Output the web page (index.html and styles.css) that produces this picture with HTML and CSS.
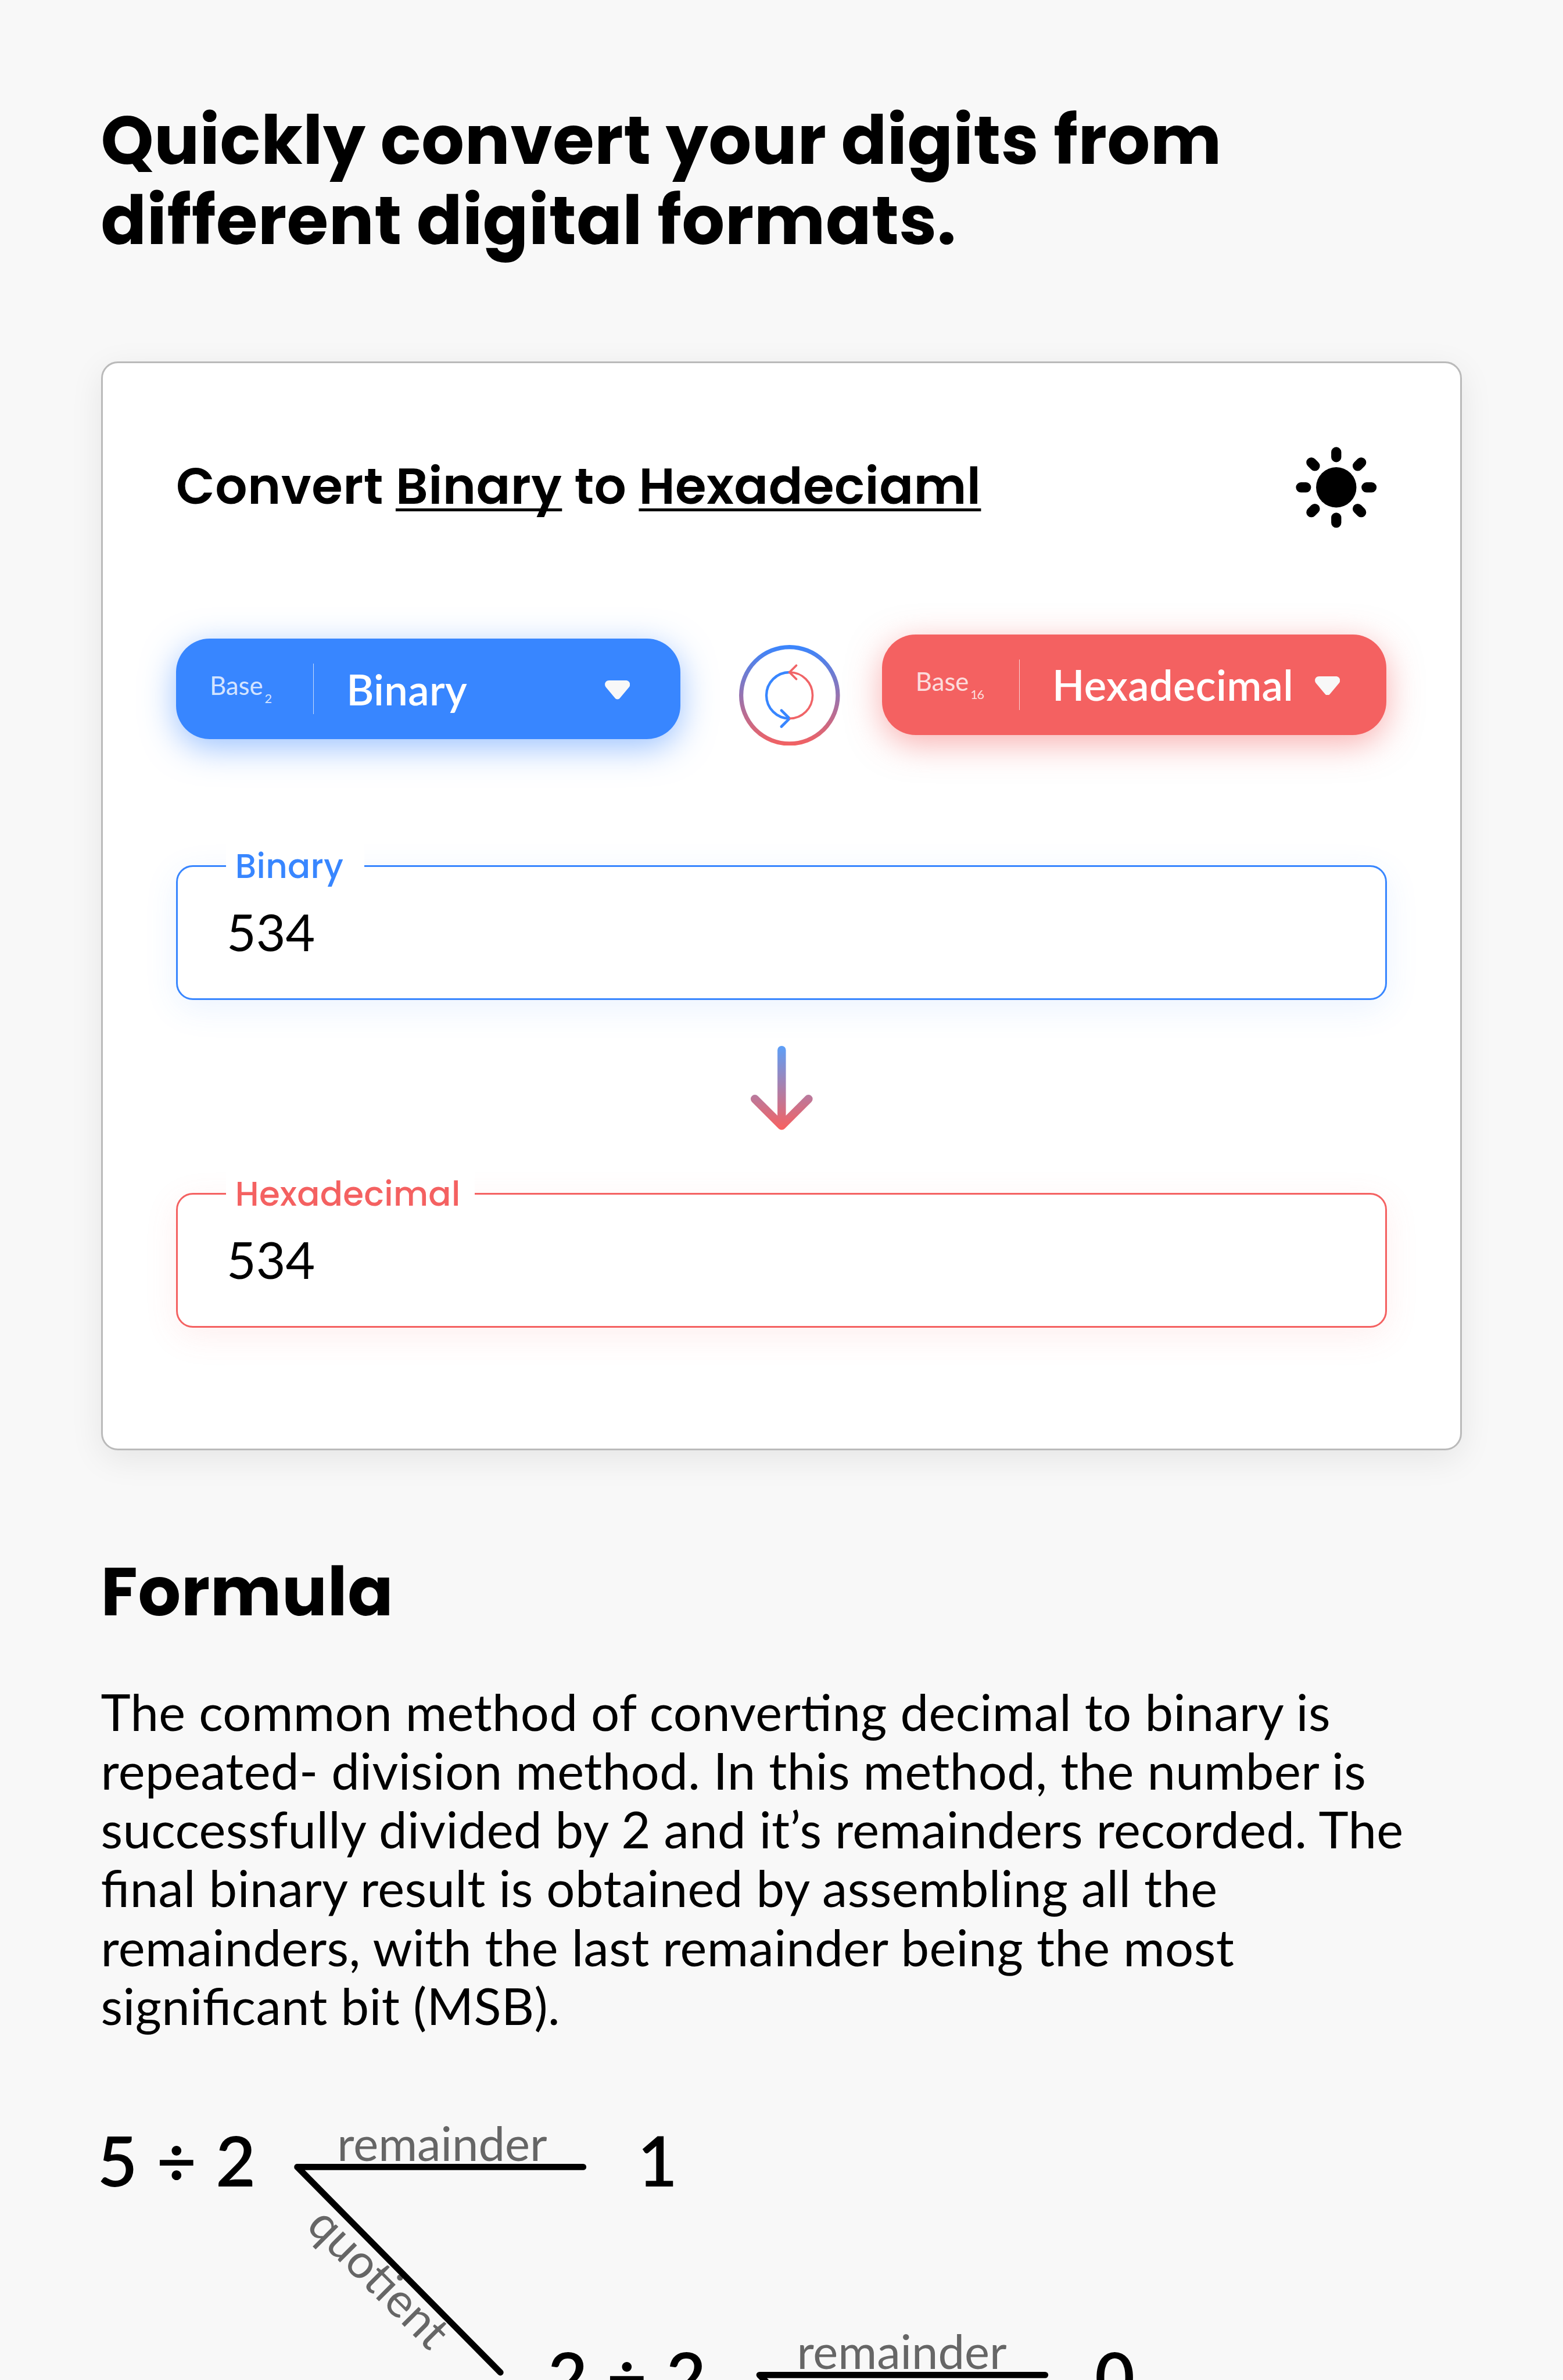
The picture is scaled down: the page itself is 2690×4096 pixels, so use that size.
FILE: index.html
```html
<!DOCTYPE html>
<html lang="en">
<head>
<meta charset="utf-8">
<title>Digit converter</title>
<link rel="stylesheet" href="styles.css">
</head>
<body>
<main class="page">
  <h1 class="title">Quickly convert your digits from<br>different digital formats.</h1>

  <section class="card">
    <header class="card-head">
      <h2 class="card-title">Convert <u>Binary</u> to <u>Hexadeciaml</u></h2>
      <svg class="sun" viewBox="0 0 20 20" aria-hidden="true">
        <circle cx="10" cy="10" r="4"/>
        <path fill="none" stroke="#000" stroke-width="2" stroke-linecap="round" d="M10 3v1M10 16v1M3 10h1M16 10h1M5.06 5.06l.69.69M14.25 14.25l.69.69M5.06 14.94l.69-.69M14.25 5.75l.69-.69"/>
      </svg>
    </header>

    <div class="controls">
      <button class="select select-blue">
        <span class="base">Base<sub>2</sub></span>
        <span class="name">Binary</span>
        <svg class="caret" viewBox="0 0 12 9"><path d="M2 0H10C11.7 0 12.5 1.8 11.6 3.1L7.2 8.4C6.6 9.2 5.4 9.2 4.8 8.4L.4 3.1C-.5 1.8 .3 0 2 0Z"/></svg>
      </button>
      <svg class="swap" viewBox="-24 -24 48 48" fill="none" stroke-linecap="round">
        <defs>
          <linearGradient id="ring" gradientUnits="userSpaceOnUse" x1="0" y1="-24" x2="0" y2="24">
            <stop offset="0" stop-color="#3886ff"/><stop offset="1" stop-color="#f46161"/>
          </linearGradient>
        </defs>
        <circle r="23" stroke="url(#ring)" stroke-width="2"/>
        <path stroke="#3886ff" stroke-width="1.2" stroke-linecap="butt" d="M0 -11A11 11 0 0 0 0 11"/>
        <path stroke="#3886ff" stroke-width="1.3" d="M-3.85 7.15L0 11L-3.85 14.85"/>
        <path stroke="#f06467" stroke-width="1" stroke-linecap="butt" d="M0 -11A11 11 0 0 1 0 11"/>
        <path stroke="#f06467" stroke-width="1.05" d="M3.25 -14.25L0 -11L3.25 -7.75"/>
      </svg>
      <button class="select select-red">
        <span class="base">Base<sub>16</sub></span>
        <span class="name">Hexadecimal</span>
        <svg class="caret" viewBox="0 0 12 9"><path d="M2 0H10C11.7 0 12.5 1.8 11.6 3.1L7.2 8.4C6.6 9.2 5.4 9.2 4.8 8.4L.4 3.1C-.5 1.8 .3 0 2 0Z"/></svg>
      </button>
    </div>

    <div class="field field-blue">
      <span class="label">Binary</span>
      <span class="value">534</span>
    </div>
    <svg class="arrow" viewBox="0 0 40 40" fill="none" stroke="url(#down)" stroke-width="4" stroke-linecap="round" stroke-linejoin="round">
      <defs>
        <linearGradient id="down" gradientUnits="userSpaceOnUse" x1="0" y1="0" x2="0" y2="40">
          <stop offset="0" stop-color="#5c9ff8"/><stop offset="1" stop-color="#f9605f"/>
        </linearGradient>
      </defs>
      <path d="M20 2V38M7.25 25.25L20 38L32.75 25.25"/>
    </svg>
    <div class="field field-red">
      <span class="label">Hexadecimal</span>
      <span class="value">534</span>
    </div>
  </section>

  <h2 class="title formula">Formula</h2>
  <p class="text">The common method of converting decimal to binary is<br>repeated- division method. In this method, the number is<br>successfully divided by 2 and it’s remainders recorded. The<br>final binary result is obtained by assembling all the<br>remainders, with the last remainder being the most<br>significant bit (MSB).</p>

  <svg class="diagram" viewBox="0 968.6 744 165">
    <g class="digits">
      <text x="46.3" y="1040.8">5 ÷ 2</text>
      <text x="303.4" y="1040.8">1</text>
      <text x="260.7" y="1143.8">2 ÷ 2</text>
      <text x="521.1" y="1143.8">0</text>
    </g>
    <g class="notes">
      <text x="160.5" y="1028.7">remainder</text>
      <text transform="translate(145.2 1060.2) rotate(45)">quotient</text>
      <text x="379.3" y="1127.7">remainder</text>
    </g>
    <path class="lines" d="M277.6 1031.5H141.5L238.2 1129.3M497.5 1130.5H361.5L458 1228"/>
  </svg>
</main>
</body>
</html>
```
FILE: styles.css
```css
html {
  font-size: 36.156px;
}

* {
  box-sizing: border-box;
}

body {
  margin: 0;
  background: #f8f8f8;
  color: #000;
  font-family: "Lato", "Open Sans", sans-serif;
  overflow: hidden;
}

svg {
  display: block;
}

.page {
  height: 4096px;
  overflow: hidden;
  padding: 4.79rem 4.8rem 0;
}

.title {
  margin: 0;
  font: 700 3.2rem/3.8rem "Poppins", "Inter", sans-serif;
  letter-spacing: .0051em;
}

.card {
  height: 51.83rem;
  margin-top: 4.82rem;
  padding: 3.5rem;
  background: #fff;
  border: .1rem solid #bababa;
  border-radius: .8rem;
  box-shadow: 0 .4rem 1.6rem rgba(0, 0, 0, .08);
}

.card-head {
  display: flex;
  justify-content: space-between;
  align-items: center;
  height: 4.8rem;
}

.card-title {
  margin: 0;
  padding-bottom: .06rem;
  font: 600 2.4rem/3.6rem "Poppins", "Inter", sans-serif;
  letter-spacing: .0052em;
}

.card-title u {
  text-decoration-thickness: .13rem;
  text-underline-offset: .235rem;
  text-decoration-skip-ink: none;
}

.sun {
  width: 4.8rem;
  height: 4.8rem;
}

.controls {
  display: flex;
  align-items: flex-start;
  height: 5.3rem;
  margin-top: 4.6rem;
}

.select {
  display: flex;
  align-items: center;
  width: 24rem;
  height: 4.8rem;
  padding: 0 2.4rem 0 1.6rem;
  border: 0;
  border-radius: 1.6rem;
  color: #fff;
  font-family: inherit;
}

.select-blue {
  margin-top: .2rem;
  background: #3886ff;
  box-shadow: 0 .4rem 1.6rem rgba(56, 134, 255, .5);
}

.select-red {
  margin-left: 2rem;
  padding-right: 2.2rem;
  background: #f46161;
  box-shadow: 0 .4rem 1.6rem rgba(244, 97, 97, .5);
}

.base {
  flex: none;
  width: 4.93rem;
  padding-bottom: .33rem;
  color: rgba(255, 255, 255, .8);
  font-size: 1.21rem;
  line-height: 1.6rem;
  text-align: left;
}

.base sub {
  margin-left: .08rem;
  font-size: .6rem;
  line-height: 0;
  letter-spacing: -.04rem;
  vertical-align: -.4rem;
}

.name {
  display: flex;
  align-items: center;
  height: 2.4rem;
  padding-left: 1.55rem;
  border-left: .05rem solid rgba(248, 248, 248, .75);
  font-size: 2rem;
  font-weight: 600;
  letter-spacing: .005em;
}

.caret {
  width: 1.2rem;
  height: .9rem;
  margin: .1rem 0 0 auto;
  fill: #f8f8f8;
}

.swap {
  flex: none;
  width: 4.8rem;
  height: 4.8rem;
  margin: .5rem 0 0 2.8rem;
}

.field {
  position: relative;
  display: flex;
  align-items: center;
  height: 6.4rem;
  padding-left: 2.32rem;
  background: #fff;
  border: .1rem solid;
  border-radius: .8rem;
}

.field-blue {
  margin-top: 5.7rem;
  border-color: #3886ff;
  box-shadow: 0 .4rem 1.6rem rgba(56, 134, 255, .1);
}

.field-red {
  border-color: #f46161;
  box-shadow: 0 .4rem 1.6rem rgba(244, 97, 97, .1);
}

.label {
  position: absolute;
  left: 2.3rem;
  top: -1.22rem;
  padding: 0 .67rem 0 .43rem;
  background: #fff;
  font: 500 1.6rem/2.4rem "Poppins", "Inter", sans-serif;
  letter-spacing: .006em;
}

.field-blue .label {
  padding-right: .98rem;
  color: #3886ff;
}

.field-red .label {
  color: #f46161;
}

.value {
  padding-bottom: .06rem;
  font-size: 2.42rem;
}

.arrow {
  width: 4rem;
  height: 4rem;
  margin: 2.2rem auto 3rem;
}

.formula {
  margin-top: 4.84rem;
}

.text {
  margin: 2.38rem -4rem 0 0;
  font-size: 2.4rem;
  line-height: 2.8rem;
  letter-spacing: .005em;
  font-feature-settings: "liga" 1;
  white-space: nowrap;
}

.diagram {
  width: 74.4rem;
  height: 16.5rem;
  margin-left: -4.8rem;
}

.digits {
  font-size: 33px;
  font-weight: 600;
  word-spacing: .8px;
}

.notes {
  fill: #666;
  font-size: 22.5px;
}

.lines {
  fill: none;
  stroke: #000;
  stroke-width: 3;
  stroke-linecap: round;
  stroke-linejoin: round;
}
```
